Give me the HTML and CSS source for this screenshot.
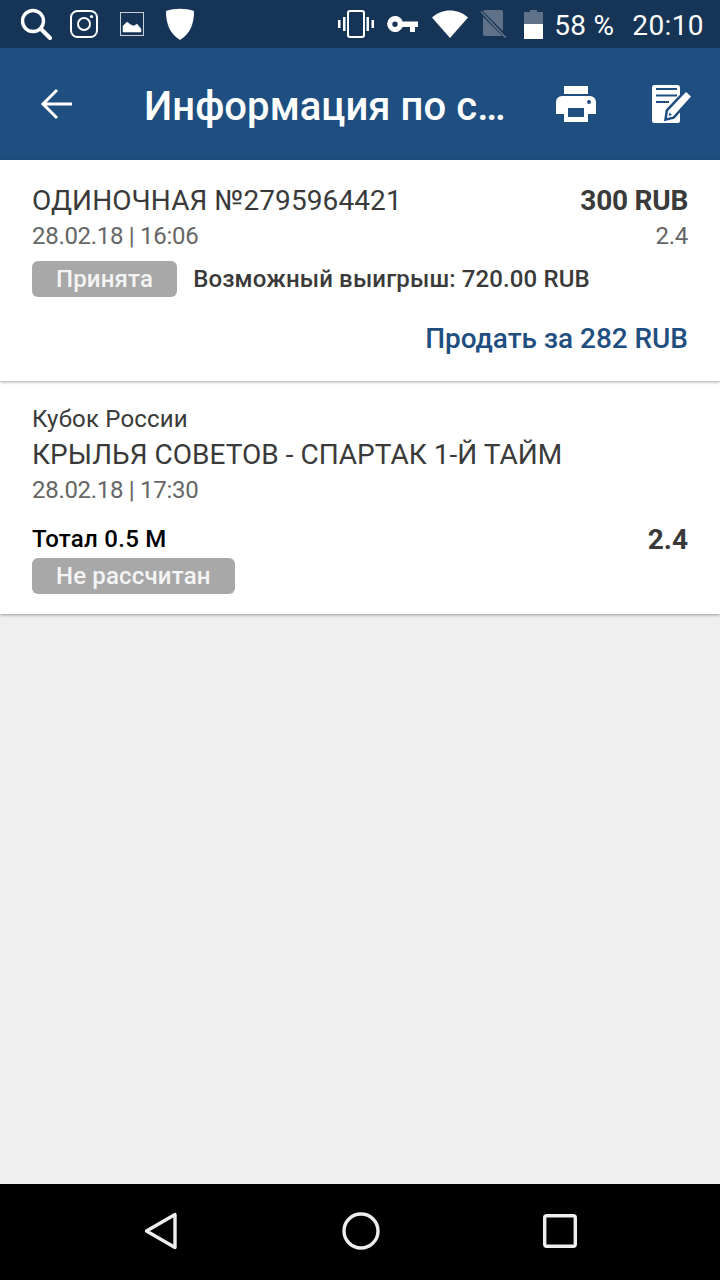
FILE: index.html
```html
<!DOCTYPE html>
<html lang="ru">
<head>
  <meta charset="UTF-8" />
  <meta name="viewport" content="width=device-width, initial-scale=1" />
  <title>Информация по ставке</title>
  <link rel="stylesheet" href="styles.css">
</head>
<body>
  <div class="screen">
    <!-- Status bar -->
    <div class="status-bar">
      <div class="status-left">
        <svg class="ic-search" width="32" height="34" viewBox="0 0 32 34"><circle cx="13" cy="14" r="10.5" fill="none" stroke="#fff" stroke-width="3.4"/><path d="M21 22l9 9" stroke="#fff" stroke-width="4" stroke-linecap="round"/></svg>
        <svg class="ic-insta" width="28" height="28" viewBox="0 0 28 28"><rect x="1" y="1" width="26" height="26" rx="6.5" fill="none" stroke="#fff" stroke-width="2"/><circle cx="14" cy="14" r="6" fill="none" stroke="#fff" stroke-width="2"/><circle cx="21.5" cy="6.5" r="1.6" fill="#fff"/></svg>
        <svg class="ic-image" width="24" height="24" viewBox="0 0 24 24"><rect x="0.5" y="0.5" width="23" height="23" fill="none" stroke="#c8d0d8" stroke-width="1"/><path d="M3 20v-6l4-4 4 3 3 1 3-2 4 5v3z" fill="#fff" stroke="#fff" stroke-width=".5"/></svg>
        <svg class="ic-shield" width="30" height="32" viewBox="0 0 30 32"><path d="M1 3C10 0 20 0 29 3c0 12-3 22-14 29C4 25 1 15 1 3z" fill="#fff"/></svg>
      </div>
      <div class="status-right">
        <svg class="ic-vibrate" width="36" height="28" viewBox="0 0 36 28"><rect x="10" y="1" width="16" height="26" rx="2" fill="none" stroke="#fff" stroke-width="2"/><path d="M5 7h2.500v14H5zM0 10h2.500v8H0zM28.500 7H31v14h-2.500zM33.500 10H36v8h-2.500z" fill="#fff"/></svg>
        <svg class="ic-key" width="32" height="18" viewBox="0 0 32 18"><path fill="#fff" fill-rule="evenodd" d="M9 1a8 8 0 0 1 7.600 5.500H32V12h-3v5h-5v-5h-7.400A8 8 0 1 1 9 1zm0 5.500a2.700 2.700 0 1 0 0 5.400 2.700 2.700 0 0 0 0-5.400z"/></svg>
        <svg class="ic-wifi" width="36" height="28" viewBox="0 0 36 28"><path d="M0 7.500C10-2 26-2 36 7.500L18 28z" fill="#fff"/></svg>
        <svg class="ic-sim" width="26" height="28" viewBox="0 0 26 28"><path d="M5 0h16a2 2 0 0 1 2 2v24H5a2 2 0 0 1-2-2V2a2 2 0 0 1 2-2z" fill="#5f7289"/><path d="M0 1l26 26" stroke="#163455" stroke-width="4"/><path d="M1 1.500l24.500 26" stroke="#5f7289" stroke-width="1.800"/></svg>
        <svg class="ic-battery" width="19" height="29" viewBox="0 0 19 29"><path d="M6 0h7v2h6v13H0V2h6z" fill="#5f7289"/><rect y="14" width="19" height="15" fill="#fff"/></svg>
        <span class="battery-text">58 %</span>
        <span class="clock">20:10</span>
      </div>
    </div>

    <!-- Toolbar -->
    <div class="toolbar">
      <button class="icon-btn back-btn">
        <svg width="32" height="32" viewBox="0 0 32 32"><path d="M32 16H3M17 2L3 16l14 14" fill="none" stroke="#fff" stroke-width="3"/></svg>
      </button>
      <div class="toolbar-title">Информация по с…</div>
      <svg class="ic-print" width="40" height="36" viewBox="0 0 40 36"><path fill="#fff" d="M8 0h24v8H8z"/><path fill="#fff" fill-rule="evenodd" d="M6 10h28a6 6 0 0 1 6 6v12h-8v8H8v-8H0V16a6 6 0 0 1 6-6zm6 12v9h16v-9zM33 14a2 2 0 1 0 0 4 2 2 0 0 0 0-4z"/></svg>
      <svg class="ic-note" width="40" height="38" viewBox="0 0 40 38"><rect width="28" height="38" rx="2.500" fill="#fff"/><path d="M4 4h21M4 10.500h21M4 17h13" stroke="#1f4f80" stroke-width="2"/><path d="M34 7l5 4.500-18 20-6 1.500 1-7z" fill="#fff" stroke="#1f4f80" stroke-width="5" paint-order="stroke"/><path d="M17.500 27.500l-.800 3.500 3.300-.900z" fill="#1f4f80"/></svg>
    </div>

    <!-- Content -->
    <div class="content">
      <div class="card bet-card">
        <div class="row">
          <div class="title">ОДИНОЧНАЯ №2795964421</div>
          <div class="amount">300 RUB</div>
        </div>
        <div class="row date-row">
          <div class="date">28.02.18 | 16:06</div>
          <div class="date">2.4</div>
        </div>
        <div class="status-row">
          <span class="badge">Принята</span>
          <span class="win">Возможный выигрыш: 720.00 RUB</span>
        </div>
        <a class="sell" href="#">Продать за 282 RUB</a>
      </div>

      <div class="card event-card">
        <div class="league">Кубок России</div>
        <div class="title">КРЫЛЬЯ СОВЕТОВ - СПАРТАК 1-Й ТАЙМ</div>
        <div class="date">28.02.18 | 17:30</div>
        <div class="row market-row">
          <div class="market">Тотал 0.5 М</div>
          <div class="amount total-odds">2.4</div>
        </div>
        <span class="badge">Не рассчитан</span>
      </div>
    </div>

    <!-- Nav bar -->
    <div class="nav-bar">
      <svg width="34" height="38" viewBox="0 0 34 38"><path d="M2.500 19L31 2.500v33z" fill="none" stroke="#eee" stroke-width="3.400" stroke-linejoin="round"/></svg>
      <svg width="38" height="38" viewBox="0 0 38 38"><circle cx="19" cy="19" r="17" fill="none" stroke="#eee" stroke-width="3.400"/></svg>
      <svg width="34" height="34" viewBox="0 0 34 34"><rect x="1.700" y="1.700" width="30.600" height="30.600" rx="2" fill="none" stroke="#eee" stroke-width="3.400"/></svg>
    </div>
  </div>
</body>
</html>
```

FILE: styles.css
```css
* {
  margin: 0;
  padding: 0;
  box-sizing: border-box;
  font-family: 'Roboto', 'Liberation Sans', sans-serif;
}

body {
  width: 720px;
  height: 1280px;
  overflow: hidden;
  background: #efefef;
}

svg {
  display: block;
  flex: none;
}

.screen {
  display: flex;
  flex-direction: column;
  height: 1280px;
}

/* status bar */
.status-bar {
  height: 48px;
  background: #163455;
  display: flex;
  justify-content: space-between;
  align-items: center;
  padding: 0 16px 0 20px;
  color: #fff;
}

.status-left,
.status-right {
  display: flex;
  align-items: center;
}

.ic-insta {
  margin-left: 18px;
}

.ic-image {
  margin-left: 22px;
}

.ic-shield {
  margin-left: 21px;
}

.ic-key {
  margin-left: 12px;
}

.ic-wifi {
  margin-left: 14px;
}

.ic-sim {
  margin-left: 12px;
}

.ic-battery {
  margin-left: 18px;
}

.battery-text {
  font-size: 28px;
  letter-spacing: 0.3px;
  margin: 2px 0 0 11px;
}

.clock {
  font-size: 28px;
  letter-spacing: 0.4px;
  margin: 2px 0 0 18px;
}

/* toolbar */
.toolbar {
  height: 112px;
  background: #1f4f80;
  display: flex;
  align-items: center;
  padding: 0 28px 0 40px;
}

.icon-btn {
  background: none;
  border: none;
}

.toolbar-title {
  flex: 1;
  margin: 4px 0 0 72px;
  font-size: 40px;
  font-weight: 500;
  letter-spacing: 0.05px;
  color: #fff;
  white-space: nowrap;
}

.ic-note {
  margin-left: 56px;
}

/* cards */
.content {
  flex: 1;
}

.card {
  background: #fff;
  padding: 0 32px;
  box-shadow: 0 1px 3px rgba(0, 0, 0, 0.35);
}

.bet-card {
  position: relative;
  z-index: 1;
  height: 221px;
  padding-top: 24px;
}

.event-card {
  height: 233px;
  padding-top: 23px;
}

.row {
  display: flex;
  justify-content: space-between;
  align-items: center;
}

.title {
  font-size: 28px;
  line-height: 34px;
  letter-spacing: 0.1px;
  color: #3a3a3a;
}

.amount {
  font-size: 28px;
  line-height: 34px;
  font-weight: 700;
  letter-spacing: -0.25px;
  color: #3a3a3a;
}

.date {
  font-size: 24px;
  line-height: 34px;
  letter-spacing: -0.3px;
  color: #666;
}

.date-row {
  margin-top: 1px;
}

.status-row {
  display: flex;
  align-items: center;
  margin-top: 8px;
}

.badge {
  display: inline-block;
  height: 36px;
  line-height: 36px;
  padding: 0 24px;
  background: #a8a8a8;
  border-radius: 6px;
  color: #f4f4f4;
  font-size: 24px;
  font-weight: 500;
  letter-spacing: 0.17px;
}

.win {
  margin-left: 16px;
  font-size: 24px;
  font-weight: 500;
  letter-spacing: 0.13px;
  color: #3a3a3a;
}

.sell {
  display: block;
  margin-top: 25px;
  text-align: right;
  font-size: 28px;
  line-height: 34px;
  font-weight: 500;
  letter-spacing: -0.05px;
  color: #1f4f80;
  text-decoration: none;
}

.league {
  font-size: 24px;
  line-height: 30px;
  letter-spacing: 0.17px;
  color: #3a3a3a;
}

.event-card .title {
  margin-top: 4px;
  letter-spacing: 0.03px;
}

.event-card .date {
  margin-top: 1px;
}

.market-row {
  margin-top: 14px;
}

.market {
  font-size: 24px;
  font-weight: 500;
  letter-spacing: 0.27px;
  color: #000;
}

.total-odds {
  letter-spacing: 0;
  padding-top: 2px;
}

.market-row + .badge {
  margin-top: 1px;
}

/* nav bar */
.nav-bar {
  height: 96px;
  background: #000;
  display: flex;
  align-items: center;
  justify-content: space-between;
  padding: 0 143px 2px 144px;
}
```
